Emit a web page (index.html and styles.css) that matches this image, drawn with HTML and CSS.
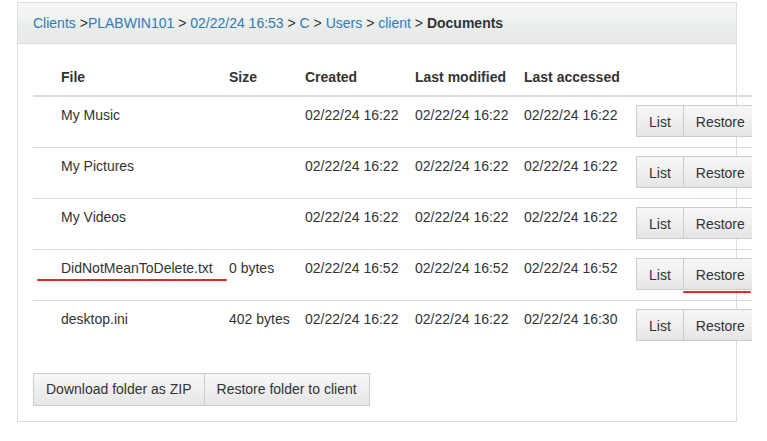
FILE: index.html
```html
<!DOCTYPE html>
<html>
<head>
<meta charset="utf-8">
<link rel="stylesheet" href="styles.css">
</head>
<body>
<div class="page">
  <div class="panel">
    <div class="panel-head">
      <a class="crumb">Clients</a> &gt;<a class="crumb">PLABWIN101</a> &gt; <a class="crumb">02/22/24 16:53</a> &gt; <a class="crumb">C</a> &gt; <a class="crumb">Users</a> &gt; <a class="crumb">client</a> &gt; <b>Documents</b>
    </div>
    <div class="panel-body">
      <table class="files">
        <colgroup>
          <col class="c-file"><col class="c-size"><col class="c-date"><col class="c-date2"><col class="c-date3"><col class="c-act">
        </colgroup>
        <thead>
          <tr><th class="first">File</th><th>Size</th><th>Created</th><th>Last modified</th><th>Last accessed</th><th></th></tr>
        </thead>
        <tbody>
          <tr><td class="first">My Music</td><td></td><td>02/22/24 16:22</td><td>02/22/24 16:22</td><td>02/22/24 16:22</td><td class="act"><div class="btn-group"><button class="btn">List</button><button class="btn">Restore</button></div></td></tr>
          <tr><td class="first">My Pictures</td><td></td><td>02/22/24 16:22</td><td>02/22/24 16:22</td><td>02/22/24 16:22</td><td class="act"><div class="btn-group"><button class="btn">List</button><button class="btn">Restore</button></div></td></tr>
          <tr><td class="first">My Videos</td><td></td><td>02/22/24 16:22</td><td>02/22/24 16:22</td><td>02/22/24 16:22</td><td class="act"><div class="btn-group"><button class="btn">List</button><button class="btn">Restore</button></div></td></tr>
          <tr><td class="first"><span class="mark-wrap">DidNotMeanToDelete.txt<span class="mark mark-file"></span></span></td><td>0 bytes</td><td>02/22/24 16:52</td><td>02/22/24 16:52</td><td>02/22/24 16:52</td><td class="act"><div class="btn-group"><button class="btn">List</button><button class="btn mark-wrap">Restore<span class="mark mark-btn"></span></button></div></td></tr>
          <tr class="last"><td class="first">desktop.ini</td><td>402 bytes</td><td>02/22/24 16:22</td><td>02/22/24 16:22</td><td>02/22/24 16:30</td><td class="act"><div class="btn-group"><button class="btn">List</button><button class="btn">Restore</button></div></td></tr>
        </tbody>
      </table>
      <div class="btn-group folder-actions">
        <button class="btn btn-lg">Download folder as ZIP</button><button class="btn btn-lg">Restore folder to client</button>
      </div>
    </div>
  </div>
</div>
</body>
</html>
```

FILE: styles.css
```css
html, body {
  margin: 0;
  padding: 0;
  background: #fff;
}
body {
  font-family: "Liberation Sans", Arial, sans-serif;
  font-size: 14px;
  color: #333;
}
.page {
  width: 752px;
  overflow: hidden;
  padding-top: 2px;
  height: 439px;
}
.panel {
  margin-left: 17px;
  width: 718px;
  border: 1px solid #dddddd;
}
.panel-head {
  height: 40px;
  line-height: 40px;
  padding-left: 15px;
  border-bottom: 1px solid #dddddd;
  background: linear-gradient(#f6f7f6 0%, #eef2ef 45%, #e9edea 60%, #eaeaea 100%);
  color: #333;
  white-space: nowrap;
}
.crumb {
  color: #337ab7;
  text-decoration: none;
}
.panel-head b {
  font-weight: bold;
}
.panel-body {
  padding: 14px 15px 15px 15px;
}
.files {
  border-collapse: collapse;
  table-layout: fixed;
  width: 735px;
}
.c-file { width: 188px; }
.c-size { width: 76px; }
.c-date { width: 110px; }
.c-date2 { width: 109px; }
.c-date3 { width: 112px; }
.c-act { width: 140px; }
.files th {
  text-align: left;
  font-weight: bold;
  padding: 9px 8px 8px 8px;
  line-height: 20px;
  border-bottom: 2px solid #dddddd;
  white-space: nowrap;
}
.files td {
  padding: 8px 8px 0 8px;
  line-height: 20px;
  vertical-align: top;
  border-bottom: 1px solid #dddddd;
  white-space: nowrap;
}
.files tr.last td {
  border-bottom: none;
}
.files .first {
  padding-left: 28px;
}
.files td.act {
  padding-top: 8px;
  padding-bottom: 10px;
}
.btn-group {
  display: flex;
}
.btn {
  font-family: "Liberation Sans", Arial, sans-serif;
  font-size: 14px;
  color: #333;
  height: 32px;
  padding: 2px 12px 0 12px;
  border: 1px solid #cccccc;
  background: linear-gradient(#f7f7f7 0%, #efefef 50%, #e4e6e5 100%);
  margin: 0;
  line-height: 28px;
  white-space: nowrap;
}
.btn + .btn {
  margin-left: -1px;
}
.btn-lg {
  height: 33px;
  padding-top: 0;
  line-height: 31px;
}
.folder-actions {
  margin-top: 22px;
}
.mark-wrap {
  position: relative;
}
.mark {
  position: absolute;
  height: 2px;
  background: #e8262a;
  border-radius: 1px;
}
.mark-file {
  left: -24px;
  right: -14px;
  bottom: -5px;
}
.mark-btn {
  left: -1px;
  width: 68px;
  bottom: -4px;
}
```
